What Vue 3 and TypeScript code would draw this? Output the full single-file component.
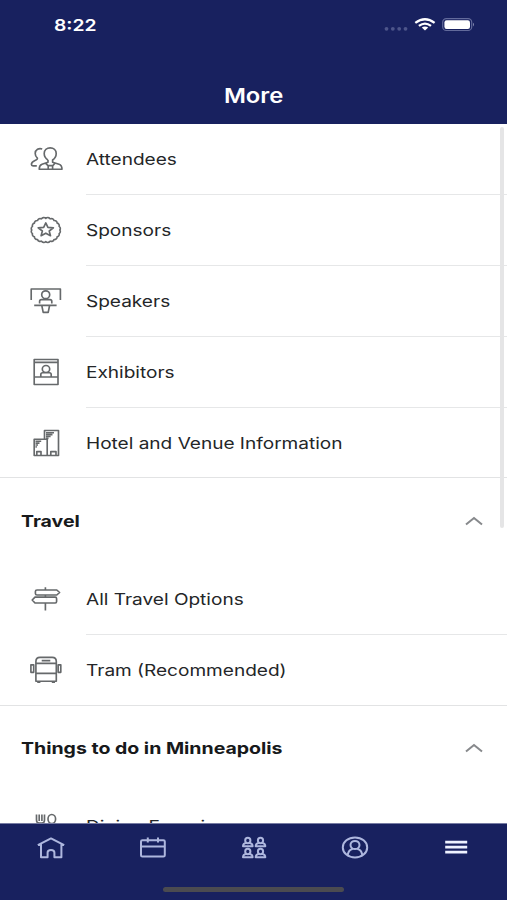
<script setup lang="ts">
interface Item {
  label: string
  icon: string
}
interface Section {
  title?: string
  items: Item[]
}

const sections: Section[] = [
  {
    items: [
      { label: 'Attendees', icon: 'attendees' },
      { label: 'Sponsors', icon: 'sponsors' },
      { label: 'Speakers', icon: 'speakers' },
      { label: 'Exhibitors', icon: 'exhibitors' },
      { label: 'Hotel and Venue Information', icon: 'hotel' },
    ],
  },
  {
    title: 'Travel',
    items: [
      { label: 'All Travel Options', icon: 'signpost' },
      { label: 'Tram (Recommended)', icon: 'tram' },
    ],
  },
  {
    title: 'Things to do in Minneapolis',
    items: [{ label: 'Dining Experiences', icon: 'dining' }],
  },
]

const icons: Record<string, string> = {
  attendees:
    'M20 16C17.4 14.4 16.2 12 16.2 9.5C16.2 6 18.8 3.9 22.2 3.9S28.2 6 28.2 9.5C28.2 12 27 14.4 24.6 16V18.2L31 20.2C33.4 21 34 22.4 34 25.2H11.2C11.2 22.4 11.8 21 14 20.2L20 18.2V16M17.5 19.2L20 21.6H24.8L27 19.2M20.2 21.6V25M24.6 21.6V25M14.2 5C11 3.8 7.2 5.5 7.2 9.6C7.2 11.5 8 13 9.4 14.2C10 16.8 3.4 16.2 3.4 20.2C3.4 21.4 4 21.8 5 21.8H8.8',
  speakers:
    'M3.2 14V3H32.4V14M11.6 17.4V15.4Q11.6 13.6 13.4 13.6H22Q23.8 13.6 23.8 15.4V17.4M6.2 19.3H28.6M13.8 19.5L15.2 26.3H20.2L21.6 19.5M13.7 8.7A4 3.9 0 1 0 21.7 8.7A4 3.9 0 1 0 13.7 8.7',
  exhibitors:
    'M6.2 2.5H30V27.5H6.2ZM6.2 5.3H30M6.2 20H30M12.8 20V17.4Q12.8 15.7 14.6 15.7H21.4Q23.2 15.7 23.2 17.4V20M14.3 12A3.7 3.5 0 1 0 21.7 12A3.7 3.5 0 1 0 14.3 12',
  hotel:
    'M16.5 11V2.5H30.5V27.5H6.2V11.2H19.2V27.5M8.8 27V23.6H13V27M22.8 27V23.6H28V27M18 4.7H26M18 6.6H24.5M18 8.5H22.6M18 10.3H20.5M7.5 13.2H13.2M7.5 15.1H11.5M7.5 17H10M7.5 18.9H8.8',
  signpost:
    'M17.4 3.2V6M17.4 11V13M17.4 19V26.4M9 6H28.8L31.6 8.5L28.8 11H9Q7.4 11 7.4 9.4V7.6Q7.4 6 9 6ZM27.2 13.1H7L4.2 16L7 19H27.2Q28.6 19 28.6 17.4V14.7Q28.6 13.1 27.2 13.1Z',
  tram: 'M7.9 6.5Q7.9 2.3 12 2.3H24.2Q28.3 2.3 28.3 6.5V26.2H7.9ZM7.9 8.4H28.3M7.9 18.4H28.3M13.7 5.6H22.3M2.9 9.8H5.7V17.3H2.9ZM30.2 9.8H32.8V17.3H30.2ZM9.2 27.1H12.4M23.8 27.1H27',
  dining:
    'M8.5 3.5V9Q8.5 12 11 12H14Q16.5 12 16.5 9V3.5M11.2 3.5V10M13.9 3.5V10M12.5 12V26M20 8A3.8 4.5 0 1 1 27.6 8A3.8 4.5 0 1 1 20 8M23.8 12.5V26',
}

const CX = 17.8
const CY = 15

// Seal outline: a ring of small outward arcs.
function sealPath(): string {
  const n = 20
  let d = ''
  for (let i = 0; i <= n; i++) {
    const a = (i / n) * Math.PI * 2
    const x = (CX + 14 * Math.cos(a)).toFixed(2)
    const y = (CY + 11.7 * Math.sin(a)).toFixed(2)
    d += i === 0 ? `M${x} ${y}` : `A2.7 2.5 0 0 1 ${x} ${y}`
  }
  return d + 'Z'
}

function starPath(): string {
  let d = ''
  for (let i = 0; i < 10; i++) {
    const a = -Math.PI / 2 + (i * Math.PI) / 5
    const r = i % 2 === 0 ? 1 : 0.45
    d += `${i ? 'L' : 'M'}${(CX + 8 * r * Math.cos(a)).toFixed(2)} ${(CY + 7.1 * r * Math.sin(a)).toFixed(2)}`
  }
  return d + 'Z'
}

icons.sponsors = sealPath() + starPath()

const tabs: { name: string; d: string; active?: boolean }[] = [
  {
    name: 'Home',
    d: 'M1.8 10.2L15 3.4L28.2 10.2M5 9.3V22.2H11.6V17.4Q11.6 14.9 15 14.9T18.4 17.4V22.2H25.4V9.3',
  },
  {
    name: 'Agenda',
    d: 'M5.4 5.2H26.4Q27.8 5.2 27.8 6.4V20.2Q27.8 21.4 26.4 21.4H5.4Q4 21.4 4 20.2V6.4Q4 5.2 5.4 5.2ZM4 11.6H27.8M10.8 2.4V7.6M21 2.4V7.6',
  },
  {
    name: 'Networking',
    d: [0, 1, 2, 3]
      .map((i) => {
        const x = i % 2 ? 21.5 : 8.8
        const y = i > 1 ? 13.6 : 2.6
        return `M${x - 2.6} ${y + 2.9}A2.6 2.7 0 1 1 ${x + 2.6} ${y + 2.9}A2.6 2.7 0 1 1 ${x - 2.6} ${y + 2.9}M${x - 1.8} ${y + 5}L${x - 4.2} ${y + 6.6}Q${x - 4.8} ${y + 7.2} ${x - 4.8} ${y + 8.7}H${x + 4.8}Q${x + 4.8} ${y + 7.2} ${x + 4.2} ${y + 6.6}L${x + 1.8} ${y + 5}`
      })
      .join(''),
  },
  {
    name: 'Profile',
    d: 'M2.8 12.4A12.2 10 0 1 1 27.2 12.4A12.2 10 0 1 1 2.8 12.4M10.5 10A4.5 4.1 0 1 1 19.5 10A4.5 4.1 0 1 1 10.5 10M7.8 19.6Q8.6 14.4 12.6 13.9M17.4 13.9Q21.4 14.4 22.2 19.6',
  },
  { name: 'More', d: 'M4.2 7.1H26.2M4.2 12.1H26.2M4.2 17.1H26.2', active: true },
]
</script>

<template>
  <div class="screen">
    <header class="header">
      <div class="status">
        <span class="time"><span class="wide">8:22</span></span>
        <svg class="indicators" width="92" height="16" viewBox="0 0 92 16">
          <g fill="#4d558a">
            <circle cx="3.5" cy="11.8" r="1.9" />
            <circle cx="9.8" cy="11.8" r="1.9" />
            <circle cx="16.2" cy="11.8" r="1.9" />
            <circle cx="22.5" cy="11.8" r="1.9" />
          </g>
          <g fill="none" stroke="#fff" stroke-width="2.3">
            <path d="M32.3 5.8Q42 -1.4 51.6 5.8" />
            <path d="M35.9 8.9Q42 4.4 48 8.9" />
          </g>
          <path d="M38.8 10.6Q42 8.4 45.2 10.6L42 13.5Z" fill="#fff" />
          <rect x="59.7" y="1.7" width="29" height="11.8" rx="3.6" fill="none" stroke="#626a9b" stroke-width="1.2" />
          <rect x="61.4" y="3.3" width="25.6" height="8.6" rx="2.2" fill="#fff" />
          <path d="M90 5.8Q92 7.5 90 9.4Z" fill="#8389b0" />
        </svg>
      </div>
      <h1 class="title"><span class="wide">More</span></h1>
    </header>

    <main class="content">
      <section v-for="(section, i) in sections" :key="i" class="section">
        <div v-if="section.title" class="section-head">
          <h2 class="wide">{{ section.title }}</h2>
          <svg class="chevron" width="20" height="12" viewBox="0 0 20 12">
            <path d="M2 9.6L10 3L18 9.6" />
          </svg>
        </div>
        <ul class="list">
          <li v-for="item in section.items" :key="item.label" class="row">
            <svg class="icon" width="36" height="30" viewBox="0 0 36 30">
              <path :d="icons[item.icon]" />
            </svg>
            <div class="label"><span class="wide">{{ item.label }}</span></div>
          </li>
        </ul>
      </section>
      <div class="scrollbar"></div>
    </main>

    <nav class="tabs">
      <div class="tab-row">
        <a v-for="tab in tabs" :key="tab.name" class="tab" :class="{ active: tab.active }">
          <svg width="30" height="24" viewBox="0 0 30 24"><path :d="tab.d" /></svg>
        </a>
      </div>
      <div class="home-indicator"></div>
    </nav>
  </div>
</template>

<style>
body {
  margin: 0;
  background: #fff;
}
</style>

<style scoped>
.screen {
  display: flex;
  flex-direction: column;
  width: 507px;
  height: 900px;
  overflow: hidden;
  background: #fff;
  color: #242628;
  font-family: Inter, 'Liberation Sans', sans-serif;
}
.header {
  flex: none;
  box-sizing: border-box;
  height: 124px;
  background: #18215f;
  color: #fff;
}
.status {
  display: flex;
  justify-content: space-between;
  height: 49px;
  padding: 0 32px 0 53.5px;
  align-items: center;
}
.wide {
  display: inline-block;
  white-space: nowrap;
  transform: scaleX(1.19);
  transform-origin: left center;
}
.time {
  font-size: 16.2px;
  font-weight: 600;
}
.title {
  display: flex;
  justify-content: center;
  margin: 0;
  padding-top: 32px;
  font-size: 20.5px;
  line-height: 30px;
  font-weight: 600;
}
.title .wide {
  transform: scaleX(1.16);
  transform-origin: center;
}
.content {
  position: relative;
  flex: 1;
  min-height: 0;
  overflow: hidden;
}
.section-head {
  display: flex;
  align-items: center;
  justify-content: space-between;
  height: 85.4px;
  padding: 0 23px 0 20.5px;
}
.section-head h2 {
  margin: 0;
  font-size: 16.4px;
  font-weight: 700;
  color: #17191b;
}
.chevron {
  fill: none;
  stroke: #87898c;
  stroke-width: 2;
}
.list {
  margin: 0;
  padding: 0;
  list-style: none;
}
.row {
  display: flex;
  align-items: center;
  height: 70.9px;
  padding-left: 28px;
}
.icon {
  flex: none;
  margin-right: 22.3px;
  fill: none;
  stroke: #66696b;
  stroke-width: 1.65;
  stroke-linejoin: round;
}
.label {
  display: flex;
  flex: 1;
  align-items: center;
  box-sizing: border-box;
  height: 100%;
  border-bottom: 1px solid #e6e7e8;
  font-size: 16px;
}
.row:last-child {
  box-sizing: border-box;
  border-bottom: 1px solid #e2e3e4;
}
.row:last-child .label {
  padding-top: 1px;
  border-bottom: 0;
}
.scrollbar {
  position: absolute;
  top: 3px;
  right: 3px;
  width: 4px;
  height: 401px;
  border-radius: 2px;
  background: #e5e5e6;
}
.tabs {
  flex: none;
  display: flex;
  flex-direction: column;
  align-items: center;
  height: 77px;
  border-top: 1px solid #777ca3;
  box-sizing: border-box;
  background: #18215f;
}
.tab-row {
  display: flex;
  align-self: stretch;
  padding-top: 11px;
}
.tab {
  display: flex;
  flex: 1;
  justify-content: center;
}
.tab path {
  fill: none;
  stroke: #aeb7de;
  stroke-width: 2;
  stroke-linejoin: round;
}
.tab.active path {
  stroke: #eef2ff;
  stroke-width: 2.6;
}
.home-indicator {
  width: 181px;
  height: 5px;
  margin-top: 28px;
  border-radius: 3px;
  background: #4b4b50;
}
</style>
